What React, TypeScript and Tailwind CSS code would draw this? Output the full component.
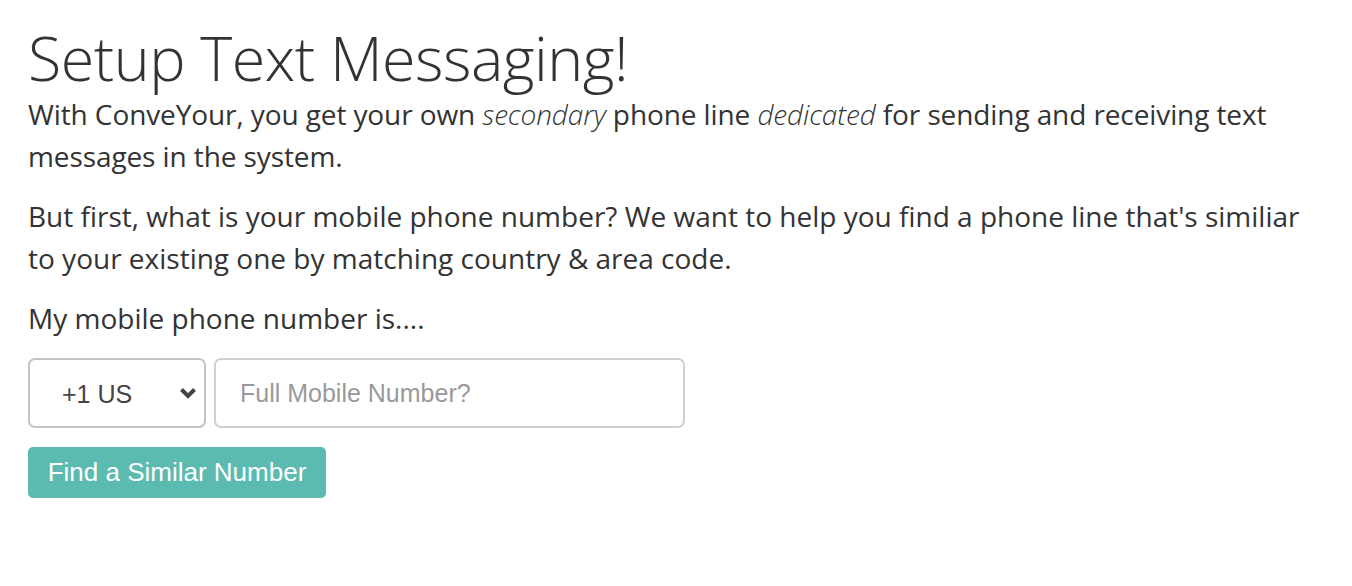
export default function App() {
  return (
    <div className="min-h-screen bg-white px-[28px] pt-[23px] text-[#333]" style={{ fontFamily: '"Open Sans", sans-serif' }}>
      <h1 className="text-[61px] font-light leading-[70px] tracking-[-0.5px]">Setup Text Messaging!</h1>
      <p className="text-[28px] leading-[42px] tracking-[-0.1px]">
        With ConveYour, you get your own <em className="font-light">secondary</em> phone line <em className="font-light">dedicated</em> for sending and receiving text messages in the system.
      </p>
      <p className="mt-[18px] text-[28px] leading-[42px]">
        But first, what is your mobile phone number? We want to help you find a phone line that's similiar to your existing one by matching country &amp; area code.
      </p>
      <p className="mt-[18px] text-[28px] leading-[42px]">My mobile phone number is....</p>

      <div style={{ fontFamily: '"Liberation Sans", Arial, sans-serif' }}>
        <div className="mt-[19px] flex gap-[8px]">
          <div className="relative h-[70px] w-[178px] rounded-[7px] border-2 border-[#c4c4c4]">
            <span className="absolute left-[32px] top-[20px] text-[25px] leading-[28px] text-[#444]">+1 US</span>
            <svg className="absolute right-[7px] top-[27px]" width="18" height="13" viewBox="0 0 18 13">
              <path d="M2.5 2.5 L9 9 L15.5 2.5" fill="none" stroke="#444" strokeWidth="4" />
            </svg>
          </div>
          <input
            className="h-[70px] w-[471px] rounded-[7px] border-2 border-[#d0d0d0] px-[24px] text-[25px] text-[#444] outline-none placeholder:text-[#999]"
            placeholder="Full Mobile Number?"
          />
        </div>

        <button className="mt-[19px] h-[51px] w-[298px] rounded-[5px] bg-[#5cbbb0] text-[26px] text-white">
          Find a Similar Number
        </button>
      </div>
    </div>
  );
}
